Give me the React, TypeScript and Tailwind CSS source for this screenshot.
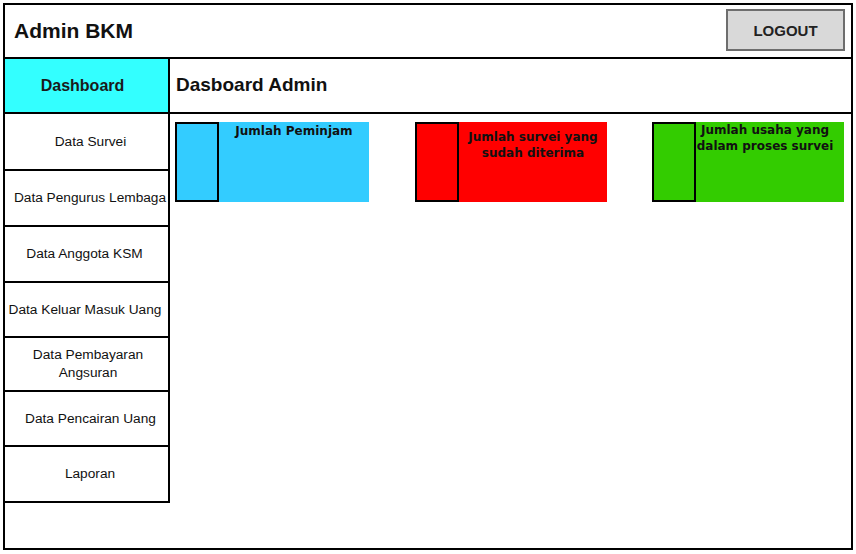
import React from 'react';

const sans = { fontFamily: '"Liberation Sans", Arial, sans-serif' };

// heights + small nudges so each label sits where it does in the mockup
const menu: { label: React.ReactNode; cls: string }[] = [
  { label: 'Data Survei', cls: 'h-[57px] pl-[8px]' },
  { label: 'Data Pengurus Lembaga', cls: 'h-[56px] pl-[7px]' },
  { label: 'Data Anggota KSM', cls: 'h-[56px] pr-[4px]' },
  { label: 'Data Keluar Masuk Uang', cls: 'h-[55px] pr-[3px]' },
  {
    label: (
      <>
        Data Pembayaran
        <br />
        Angsuran
      </>
    ),
    cls: 'h-[54px] pl-[3px]',
  },
  { label: 'Data Pencairan Uang', cls: 'h-[55px] pl-[8px]' },
  { label: 'Laporan', cls: 'h-[56px] pl-[7px]' },
];

function StatCard({
  bg,
  width,
  textClass,
  children,
}: {
  bg: string;
  width: string;
  textClass: string;
  children: React.ReactNode;
}) {
  return (
    <div className={`${bg} ${width} h-[80px] flex`}>
      <div className="w-[44px] h-full border-2 border-black shrink-0" />
      <div
        className={`flex-1 text-center text-[12px] leading-[16px] font-bold text-[#111] whitespace-nowrap ${textClass}`}
        style={{ fontFamily: '"Comic Sans MS", "DejaVu Sans", sans-serif' }}
      >
        {children}
      </div>
    </div>
  );
}

export default function App() {
  return (
    <div className="w-[856px] h-[554px] bg-white pt-[3px] pl-[3px]" style={sans}>
      <div className="w-[850px] h-[547px] border-2 border-black flex flex-col">
        {/* top bar */}
        <header className="h-[54px] shrink-0 border-b-2 border-black flex items-center justify-between pl-[9px] pr-[6px]">
          <h1 className="text-[21px] font-bold text-[#111]">Admin BKM</h1>
          <button className="w-[119px] h-[42px] mb-[2px] pt-[2px] bg-[#d9d9d9] border-2 border-[#6e6e6e] text-[15px] font-bold text-[#222]">
            LOGOUT
          </button>
        </header>

        <div className="flex flex-1">
          {/* sidebar */}
          <nav className="w-[165px] shrink-0 flex flex-col">
            <div className="h-[55px] bg-[#33ffff] border-r-2 border-b-2 border-black flex items-center justify-center pr-[8px] text-[16px] font-bold text-[#1a1a1a]">
              Dashboard
            </div>
            {menu.map((m, i) => (
              <div
                key={i}
                className={`${m.cls} border-r-2 border-b-2 border-black flex items-center justify-center text-center text-[13.7px] leading-[18px] text-[#111] whitespace-nowrap`}
              >
                <span>{m.label}</span>
              </div>
            ))}
          </nav>

          {/* main */}
          <main className="flex-1 flex flex-col">
            <div className="h-[55px] border-b-2 border-black flex items-center pl-[6px]">
              <h2 className="text-[19px] font-bold text-[#111]">Dasboard Admin</h2>
            </div>
            <div className="flex pt-[8px] pl-[5px]">
              <StatCard bg="bg-[#33ccff]" width="w-[194px]" textClass="pt-[1px]">
                Jumlah Peminjam
              </StatCard>
              <div className="w-[46px]" />
              <StatCard bg="bg-[#ff0000]" width="w-[192px]" textClass="pt-[7px]">
                Jumlah survei yang
                <br />
                sudah diterima
              </StatCard>
              <div className="w-[45px]" />
              <StatCard bg="bg-[#33cc00]" width="w-[192px]" textClass="pr-[10px]">
                Jumlah usaha yang
                <br />
                dalam proses survei
              </StatCard>
            </div>
          </main>
        </div>
      </div>
    </div>
  );
}
